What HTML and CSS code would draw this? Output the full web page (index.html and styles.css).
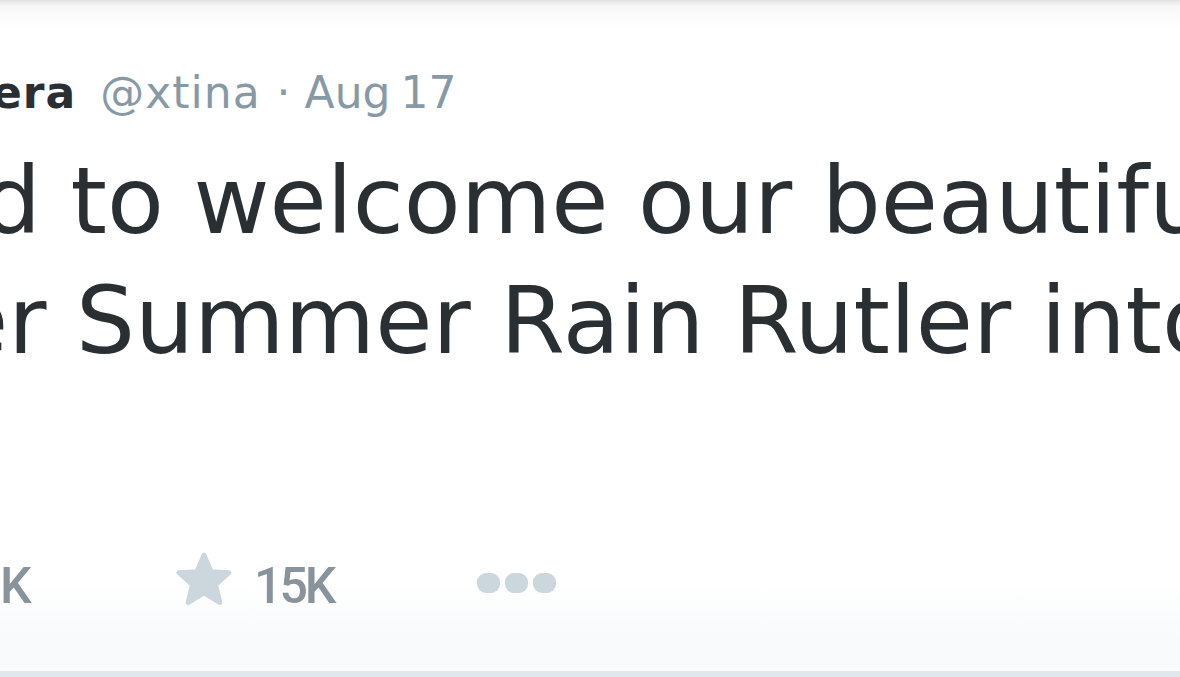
FILE: index.html
```html
<!DOCTYPE html>
<html>
<head>
<meta charset="utf-8">
<link rel="stylesheet" href="styles.css">
</head>
<body>
<div class="page">
  <div class="tweet">
    <div class="header">
      <span class="name">era</span>
      <span class="handle">@xtina</span>
      <span class="sep">·</span>
      <span class="time">Aug 17</span>
    </div>
    <div class="text">
      <div class="line line1">d to welcome our beautiful</div>
      <div class="line line2">er Summer Rain Rutler into</div>
    </div>
    <div class="actions">
      <span class="count first">K</span>
      <span class="fav">
        <svg class="star" viewBox="0 0 60 56" width="58" height="54"><path d="M30 3 L37.5 20.5 L56 21.5 L42 34 L46.5 52.5 L30 42.5 L13.5 52.5 L18 34 L4 21.5 L22.5 20.5 Z" fill="#ccd6dd" stroke="#ccd6dd" stroke-width="5" stroke-linejoin="round"/></svg>
        <span class="count">15K</span>
      </span>
      <span class="more">
        <i></i><i></i><i></i>
      </span>
    </div>
  </div>
  <div class="bottom"></div>
</div>
</body>
</html>
```
FILE: styles.css
```css
html, body {
  margin: 0;
  padding: 0;
  background: #ffffff;
}
body {
  width: 1180px;
  height: 677px;
  overflow: hidden;
}
.page {
  width: 1180px;
  height: 677px;
  overflow: hidden;
  background: linear-gradient(#e2e2e2 0px, #ececec 3px, #f7f7f7 6px, #fbfbfb 14px, #ffffff 30px);
  display: flex;
  flex-direction: column;
}
.tweet {
  flex: 1;
  padding-top: 68px;
  font-family: "DejaVu Sans", sans-serif;
  background: linear-gradient(rgba(255,255,255,0) 580px, #f8fafb 640px);
}
.header {
  font-size: 44px;
  line-height: 50px;
  height: 50px;
  white-space: nowrap;
  display: flex;
}
.name {
  color: #292f33;
  font-weight: bold;
  margin-left: -8px;
  letter-spacing: 1px;
}
.handle {
  color: #8899a6;
  margin-left: 24px;
  letter-spacing: 1px;
}
.sep {
  color: #8899a6;
  margin-left: 16px;
}
.time {
  color: #8899a6;
  margin-left: 14px;
  word-spacing: -4px;
}
.text {
  margin-top: 23px;
  color: #292f33;
  font-size: 93px;
  line-height: 120px;
  white-space: nowrap;
}
.line1 {
  margin-left: -18px;
}
.line2 {
  margin-left: -49px;
}
.actions {
  margin-top: 180px;
  display: flex;
  align-items: flex-start;
  height: 50px;
  font-family: Roboto, "DejaVu Sans", sans-serif;
  font-size: 50px;
  line-height: 50px;
  color: #88939b;
  font-weight: 500;
  white-space: nowrap;
}
.count {
  letter-spacing: -3px;
}
.first {
  width: 175px;
}
.fav {
  display: flex;
  align-items: flex-start;
  gap: 21px;
  width: 302px;
}
.star {
  display: block;
  margin-top: -9px;
}
.more {
  display: flex;
  gap: 5px;
  margin-top: 12px;
}
.more i {
  display: block;
  width: 23px;
  height: 20px;
  border-radius: 9px;
  background: #ccd6dd;
}
.bottom {
  height: 6px;
  background: #e1e8ed;
}
```
